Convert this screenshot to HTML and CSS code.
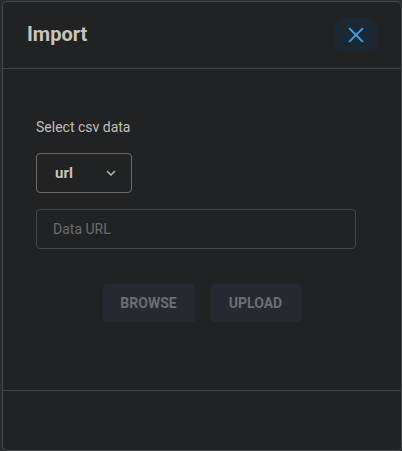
FILE: index.html
```html
<!DOCTYPE html>
<html>
<head>
<meta charset="utf-8">
<link rel="stylesheet" href="styles.css">
</head>
<body>
<div class="modal">
  <div class="header">
    <h1 class="title">Import</h1>
    <button class="close" aria-label="close">
      <svg width="18" height="18" viewBox="0 0 18 18"><path d="M2 2 L16 16 M16 2 L2 16" stroke="#3a9ee8" stroke-width="2.2" stroke-linecap="square" fill="none"/></svg>
    </button>
  </div>
  <div class="body">
    <div class="label">Select csv data</div>
    <div class="select">
      <span class="select-value">url</span>
      <svg width="10" height="6" viewBox="0 0 10 6"><path d="M1 1 L5 5 L9 1" stroke="#b8b3aa" stroke-width="1.5" fill="none"/></svg>
    </div>
    <div class="input"><span class="placeholder">Data URL</span></div>
    <div class="actions">
      <button class="btn browse">BROWSE</button>
      <button class="btn upload">UPLOAD</button>
    </div>
  </div>
  <div class="footer"></div>
</div>
</body>
</html>
```

FILE: styles.css
```css
html, body {
  margin: 0;
  padding: 0;
  background: #2a2b2e;
  width: 402px;
  height: 451px;
  overflow: hidden;
  font-family: Roboto, "Liberation Sans", sans-serif;
}
.modal {
  box-sizing: border-box;
  margin: 1px 0 0 2px;
  width: 400px;
  height: 450px;
  background: #212224;
  border: 1px solid #48494c;
  border-radius: 5px;
  display: flex;
  flex-direction: column;
}
.header {
  height: 67px;
  box-sizing: border-box;
  border-bottom: 1px solid #404145;
  display: flex;
  align-items: center;
  justify-content: space-between;
  padding: 0 23px 0 24px;
}
.title {
  margin: 0;
  font-size: 20px;
  font-weight: 700;
  color: #c9c5bd;
  padding-bottom: 2px;
}
.close {
  width: 44px;
  height: 34px;
  border: none;
  border-radius: 11px;
  background: #1b2733;
  display: flex;
  align-items: center;
  justify-content: center;
  padding: 0;
  margin-top: -1px;
}
.close svg { width: 16px; height: 16px; }
.body {
  height: 322px;
  box-sizing: border-box;
  border-bottom: 1px solid #404145;
  padding: 49px 44px 0 33px;
}
.label {
  font-size: 14px;
  color: #c3bfb8;
  line-height: 18px;
}
.select {
  margin-top: 17px;
  box-sizing: border-box;
  width: 96px;
  height: 40px;
  border: 1px solid #6f675d;
  border-radius: 4px;
  display: flex;
  align-items: center;
  justify-content: space-between;
  padding: 0 15px 0 18px;
}
.select-value {
  font-size: 15px;
  font-weight: 700;
  color: #c9c5bd;
}
.input {
  margin-top: 16px;
  box-sizing: border-box;
  width: 320px;
  height: 40px;
  border: 1px solid #45464a;
  border-radius: 4px;
  display: flex;
  align-items: center;
  padding-left: 16px;
}
.placeholder {
  font-size: 14px;
  color: #6d6d6f;
}
.actions {
  margin-top: 35px;
  display: flex;
  justify-content: center;
  gap: 16px;
  padding-left: 10px;
}
.btn {
  height: 38px;
  border: none;
  border-radius: 3px;
  background: #262930;
  color: #6e6e70;
  font-family: Roboto, "Liberation Sans", sans-serif;
  font-size: 14px;
  font-weight: 700;
  padding: 0;
}
.browse { width: 92px; }
.upload { width: 90px; }
.footer { flex: 1; }
```
